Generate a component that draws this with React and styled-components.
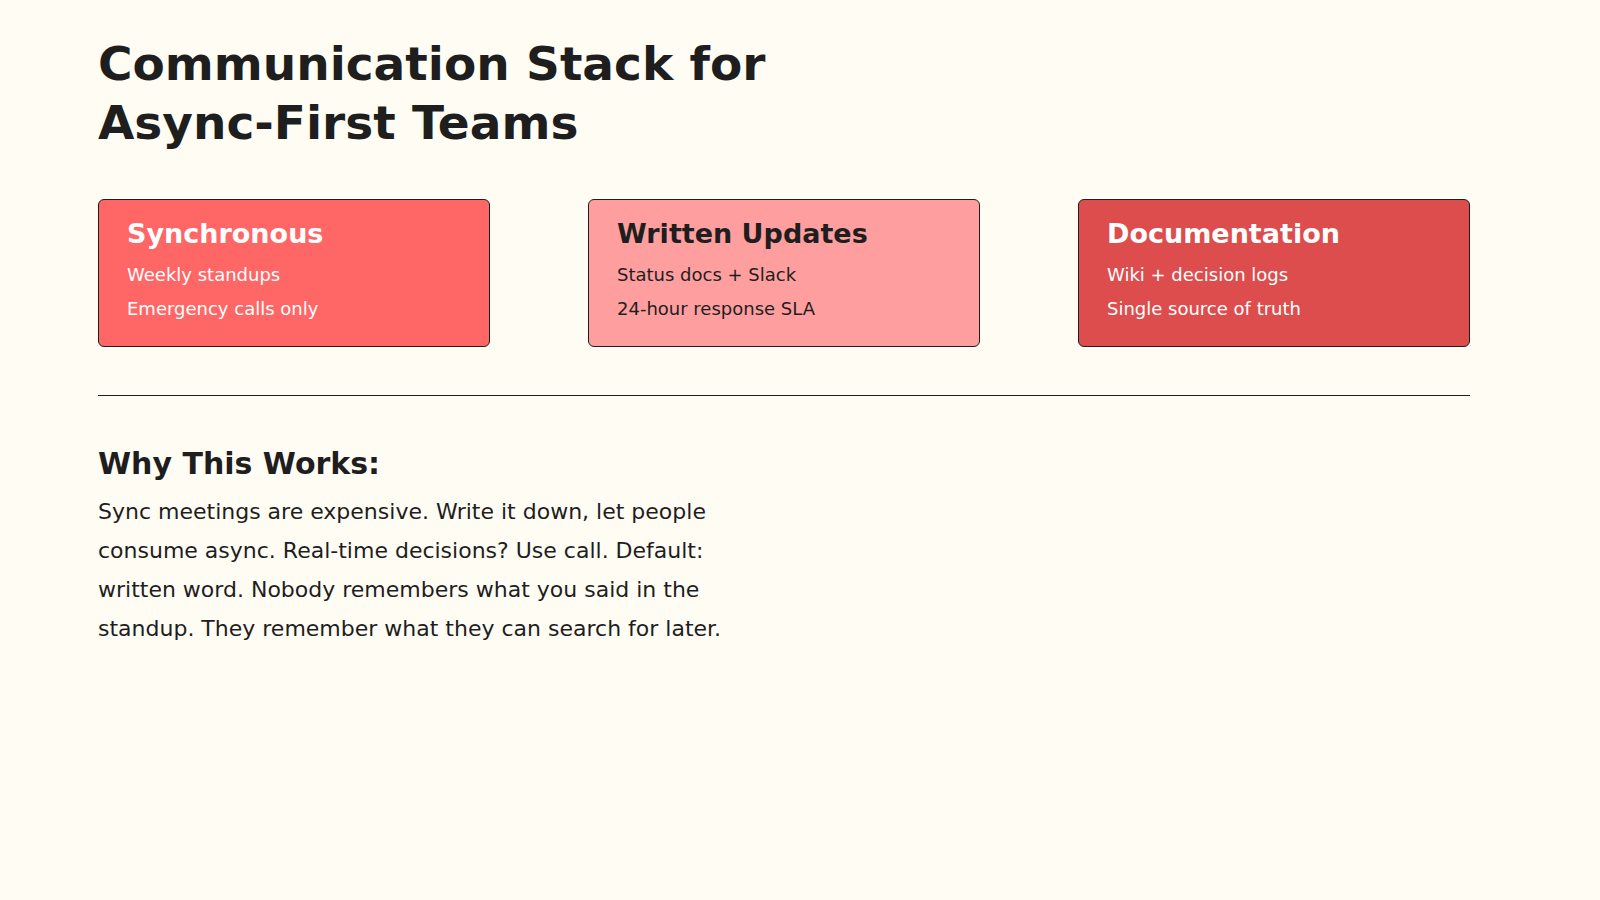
import React from "react";
import styled, { createGlobalStyle } from "styled-components";

const Global = createGlobalStyle`
  html, body { margin: 0; background: #fffcf4; }
  body { font-family: "DejaVu Sans", sans-serif; color: #1e1e1e; }
`;

const Page = styled.div`
  padding: 34px 98px 0 98px;
  width: 1372px;
  height: 866px;
`;

const Title = styled.h1`
  margin: 0;
  font-size: 47px;
  line-height: 59px;
  font-weight: 700;
  width: 720px;
`;

const Cards = styled.div`
  margin-top: 47px;
  display: grid;
  grid-template-columns: repeat(3, 392px);
  justify-content: space-between;
`;

const Card = styled.div`
  box-sizing: border-box;
  height: 148px;
  border: 1.5px solid #1e1e1e;
  border-radius: 6px;
  background: ${(p) => p.$bg};
  color: ${(p) => p.$fg};
  padding: 16px 28px;
`;

const CardTitle = styled.div`
  font-size: 27px;
  font-weight: 700;
  line-height: 36px;
  margin-bottom: 6px;
`;

const CardLine = styled.div`
  font-size: 18px;
  line-height: 34px;
`;

const Rule = styled.hr`
  margin: 48px 0 0;
  border: 0;
  border-top: 1.5px solid #1e1e1e;
`;

const Heading = styled.h2`
  margin: 48px 0 0;
  font-size: 30px;
  line-height: 40px;
  font-weight: 700;
`;

const Body = styled.p`
  margin: 8px 0 0;
  font-size: 22px;
  line-height: 39px;
  width: 690px;
`;

const cards = [
  { t: "Synchronous", l: ["Weekly standups", "Emergency calls only"], bg: "#ff6666", fg: "#fff" },
  { t: "Written Updates", l: ["Status docs + Slack", "24-hour response SLA"], bg: "#ff9e9e", fg: "#1e1e1e" },
  { t: "Documentation", l: ["Wiki + decision logs", "Single source of truth"], bg: "#dd4d4d", fg: "#fff" },
];

export default function App() {
  return (
    <Page>
      <Global />
      <Title>Communication Stack for Async-First Teams</Title>
      <Cards>
        {cards.map((c) => (
          <Card key={c.t} $bg={c.bg} $fg={c.fg}>
            <CardTitle>{c.t}</CardTitle>
            {c.l.map((x) => (
              <CardLine key={x}>{x}</CardLine>
            ))}
          </Card>
        ))}
      </Cards>
      <Rule />
      <Heading>Why This Works:</Heading>
      <Body>
        Sync meetings are expensive. Write it down, let people consume async. Real-time decisions? Use call. Default: written word. Nobody remembers what you said in the standup. They remember what they can search for later.
      </Body>
    </Page>
  );
}
